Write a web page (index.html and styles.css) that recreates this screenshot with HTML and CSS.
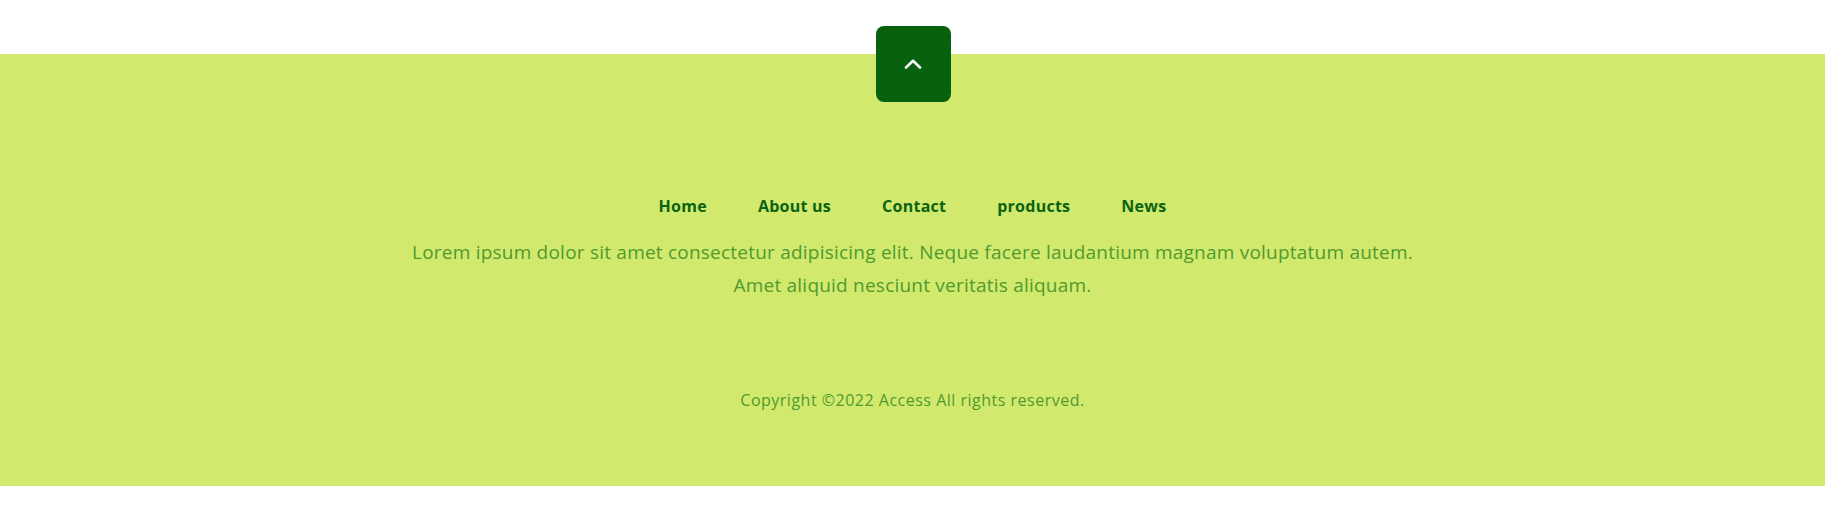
FILE: index.html
```html
<!DOCTYPE html>
<html lang="en">
<head>
<meta charset="utf-8">
<title>Footer</title>
<link rel="stylesheet" href="styles.css">
</head>
<body>
<div class="page">
  <footer class="footer">
    <a class="to-top" href="#" aria-label="Back to top">
      <svg width="18" height="10" viewBox="0 0 18 10"><path d="M2 8.5 L9 1.8 L16 8.5" fill="none" stroke="#ffffff" stroke-width="2.6" stroke-linecap="round" stroke-linejoin="round"/></svg>
    </a>
    <nav class="nav">
      <a href="#">Home</a>
      <a href="#">About us</a>
      <a href="#">Contact</a>
      <a href="#">products</a>
      <a href="#">News</a>
    </nav>
    <p class="desc">Lorem ipsum dolor sit amet consectetur adipisicing elit. Neque facere laudantium magnam voluptatum autem. Amet aliquid nesciunt veritatis aliquam.</p>
    <p class="copy">Copyright ©2022 Access All rights reserved.</p>
  </footer>
</div>
</body>
</html>
```

FILE: styles.css
```css
html, body {
  margin: 0;
  padding: 0;
  background: #ffffff;
}
body {
  font-family: "Open Sans", "Liberation Sans", sans-serif;
}
.page {
  padding-top: 54px;
  height: 506px;
  box-sizing: border-box;
}
.footer {
  position: relative;
  background: #d1e96d;
  height: 432px;
  box-sizing: border-box;
  padding-top: 140px;
  text-align: center;
}
.to-top {
  position: absolute;
  top: -28px;
  left: 50%;
  margin-left: -37px;
  width: 75px;
  height: 76px;
  border-radius: 8px;
  background: #08610f;
  display: flex;
  align-items: center;
  justify-content: center;
}
.nav {
  display: flex;
  justify-content: center;
  gap: 51px;
  line-height: 24px;
}
.nav a {
  color: #0b6312;
  font-weight: 700;
  font-size: 16px;
  letter-spacing: 0.25px;
  text-decoration: none;
}
.desc {
  margin: 18px auto 0;
  max-width: 1012px;
  font-size: 19px;
  letter-spacing: 0.22px;
  line-height: 33px;
  color: #509a30;
}
.copy {
  margin: 86px 0 0;
  font-size: 16px;
  letter-spacing: 0.5px;
  line-height: 24px;
  color: #509a30;
}
```
